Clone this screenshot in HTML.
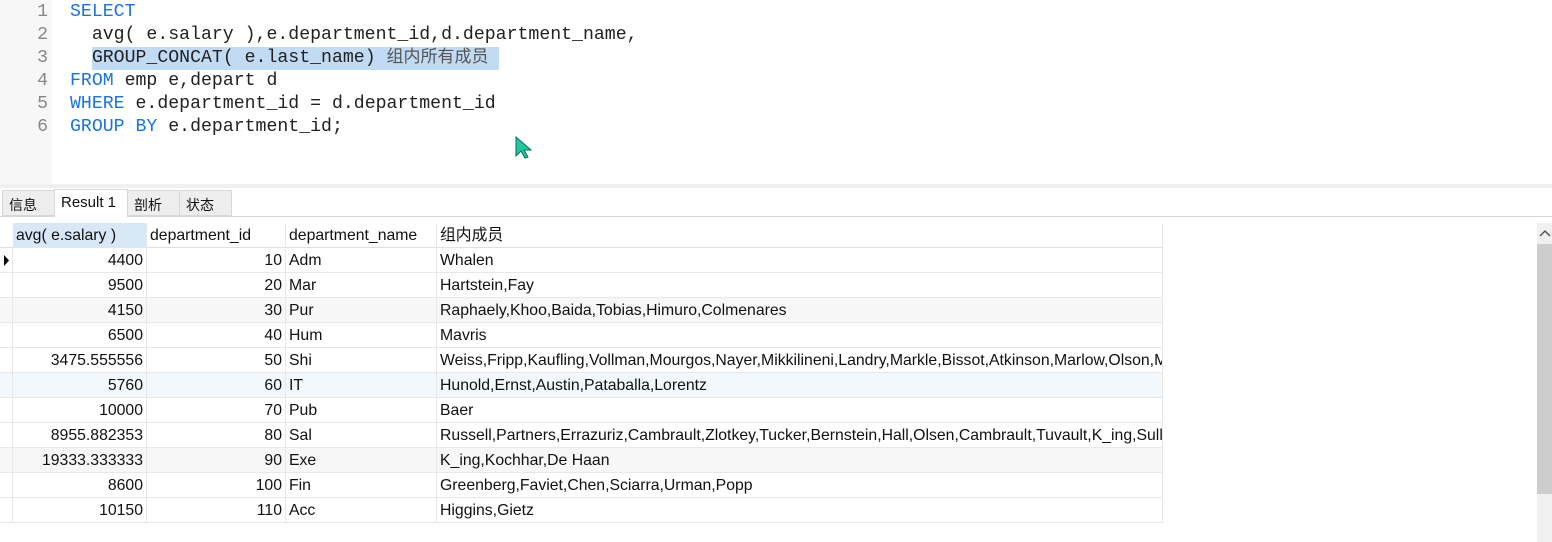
<!DOCTYPE html>
<html><head><meta charset="utf-8"><style>
*{margin:0;padding:0;box-sizing:border-box}
body{width:1552px;height:542px;background:#fff;position:relative;overflow:hidden;font-family:"Liberation Sans","Noto Sans CJK SC",sans-serif}
.gutter{position:absolute;left:0;top:0;width:52px;height:184px;background:#f7f7f7}
.code{position:absolute;left:0;top:1px;font-family:"Liberation Mono","Noto Sans CJK SC",monospace;font-size:18.2px;}
.ln{position:absolute;left:0;width:48px;text-align:right;color:#888;height:23px;line-height:23px}
.cl{position:absolute;left:70px;white-space:pre;color:#222;height:23px;line-height:23px}
.kw{color:#1a73e8}
.sel{background:#c2dbf5;display:inline-block;height:23px;line-height:23px}
.band{position:absolute;left:0;top:184px;width:1552px;height:4px;background:#f0f0f0}
.tab{position:absolute;top:190px;height:26px;border:1px solid #d8d8d8;background:#eeeeee;font-size:14px;padding:4px 0 0 6px;color:#111}
.tabline{position:absolute;left:0;top:216px;width:1552px;height:1px;background:#d8d8d8}
.row{position:absolute;left:0;width:1163px;height:25px;border-bottom:1px solid #e8e8e8;font-size:15.8px;color:#111}
.c{position:absolute;top:0;height:25px;line-height:25px;border-right:1px solid #e8e8e8;white-space:nowrap;overflow:hidden}
.r{text-align:right;padding-right:3px}
.l{padding-left:3px}
</style></head><body>
<div class="gutter"></div>
<div class="code">
<div class="ln" style="top:0">1</div><div class="cl kw" style="top:0">SELECT</div>
<div class="ln" style="top:23px">2</div><div class="cl" style="top:23px">  avg( e.salary ),e.department_id,d.department_name,</div>
<div class="ln" style="top:46px">3</div><div class="cl" style="top:46px">  <span class="sel">GROUP_CONCAT( e.last_name) <span style="color:#555;font-size:17px">组内所有成员</span> </span></div>
<div class="ln" style="top:69px">4</div><div class="cl" style="top:69px"><span class="kw">FROM</span> emp e,depart d</div>
<div class="ln" style="top:92px">5</div><div class="cl" style="top:92px"><span class="kw">WHERE</span> e.department_id = d.department_id</div>
<div class="ln" style="top:115px">6</div><div class="cl" style="top:115px"><span class="kw">GROUP BY</span> e.department_id;</div>
</div>
<svg style="position:absolute;left:515px;top:136px" width="18" height="24"><path d="M1 1 L1 20 L6 15 L10 22 L13 21 L9 14 L16 14 Z" fill="#1fc9a0" stroke="#0b6b55" stroke-width="1"/></svg>
<div class="band"></div>
<div class="tabline"></div>
<div class="tab" style="left:2px;width:53px">信息</div>
<div class="tab" style="left:54px;width:74px;top:189px;height:28px;background:#fff;border-bottom:none;font-size:15px">Result 1</div>
<div class="tab" style="left:127px;width:53px">剖析</div>
<div class="tab" style="left:179px;width:53px">状态</div>

<div class="row" style="top:223px;height:25px;border-bottom:1px solid #e0e0e0">
<div class="c l" style="left:13px;width:134px;background:#d9e8f7">avg( e.salary )</div>
<div class="c l" style="left:147px;width:139px">department_id</div>
<div class="c l" style="left:286px;width:151px">department_name</div>
<div class="c l" style="left:437px;width:726px">组内成员</div>
</div>
<div id="rows"></div>
<div style="position:absolute;left:1537px;top:223px;width:15px;height:319px;background:#f0f0f0"></div>
<div style="position:absolute;left:1537px;top:244px;width:15px;height:250px;background:#cdcdcd"></div>
<svg style="position:absolute;left:1539px;top:228px" width="12" height="10"><path d="M1 8 L6 3 L11 8" fill="none" stroke="#555" stroke-width="1.5"/></svg>
<script>
var d=[["4400","10","Adm","Whalen"],["9500","20","Mar","Hartstein,Fay"],["4150","30","Pur","Raphaely,Khoo,Baida,Tobias,Himuro,Colmenares"],["6500","40","Hum","Mavris"],["3475.555556","50","Shi","Weiss,Fripp,Kaufling,Vollman,Mourgos,Nayer,Mikkilineni,Landry,Markle,Bissot,Atkinson,Marlow,Olson,Mallin"],["5760","60","IT","Hunold,Ernst,Austin,Pataballa,Lorentz"],["10000","70","Pub","Baer"],["8955.882353","80","Sal","Russell,Partners,Errazuriz,Cambrault,Zlotkey,Tucker,Bernstein,Hall,Olsen,Cambrault,Tuvault,K_ing,Sully"],["19333.333333","90","Exe","K_ing,Kochhar,De Haan"],["8600","100","Fin","Greenberg,Faviet,Chen,Sciarra,Urman,Popp"],["10150","110","Acc","Higgins,Gietz"]];
var bg={2:"#f7f7f7",5:"#f3f8fd",8:"#f7f7f7"};var h="";
d.forEach(function(r,i){var t=248+i*25;h+='<div class="row" style="top:'+t+'px;background:'+(bg[i]||"#fff")+'">'+
'<div class="c" style="left:0;width:13px">'+(i==0?'<svg width="10" height="25"><path d="M4 7 L9 12.5 L4 18Z" fill="#000"/></svg>':'')+'</div>'+
'<div class="c r" style="left:13px;width:134px">'+r[0]+'</div><div class="c r" style="left:147px;width:139px">'+r[1]+'</div><div class="c l" style="left:286px;width:151px">'+r[2]+'</div><div class="c l" style="left:437px;width:726px">'+r[3]+'</div></div>';});
document.getElementById("rows").innerHTML=h;
</script>
</body></html>
